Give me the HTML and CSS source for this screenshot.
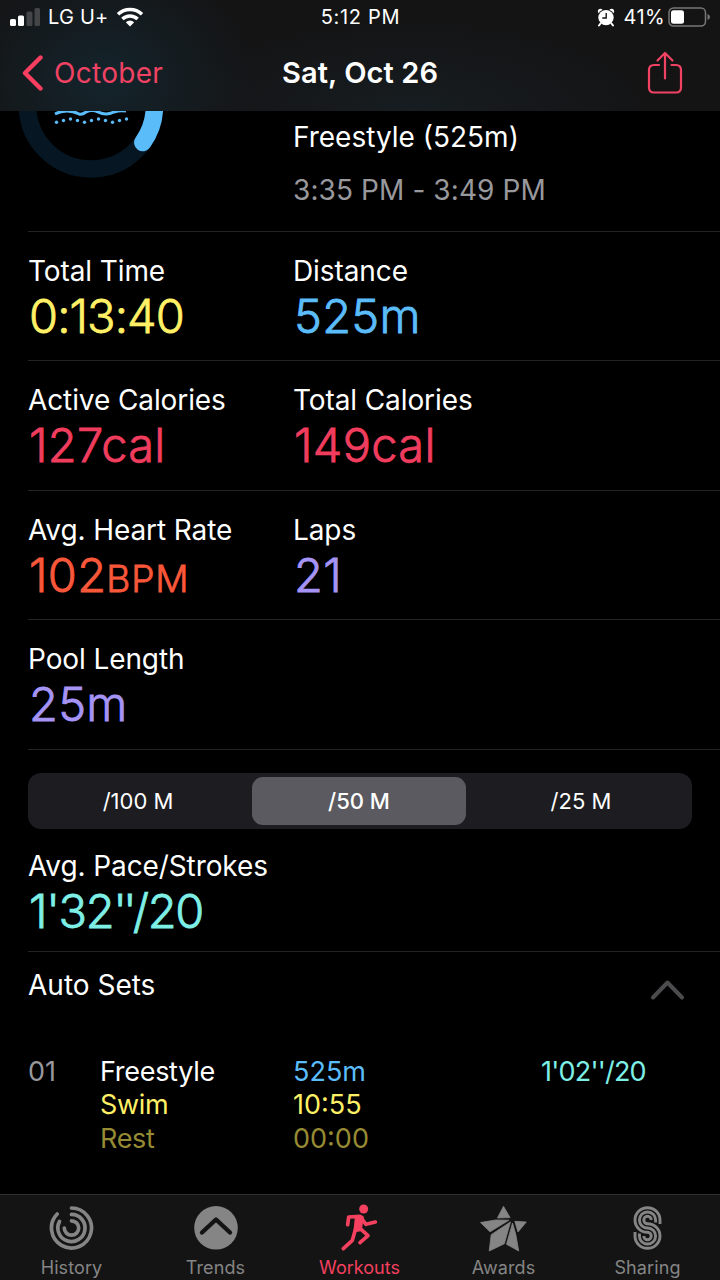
FILE: index.html
```html
<!DOCTYPE html>
<html lang="en">
<head>
  <meta charset="UTF-8">
  <meta name="viewport" content="width=device-width, initial-scale=1.0">
  <title>Workout Details</title>
  <link rel="stylesheet" href="styles.css">
</head>
<body>
  <div class="app">
    <header class="top">
      <div class="status-bar">
        <div class="status-left">
          <svg class="signal" width="30" height="20" viewBox="0 0 30 20">
            <rect x="0" y="12" width="6" height="7" rx="1.5" fill="#fff"/>
            <rect x="8" y="8.5" width="6" height="10.5" rx="1.5" fill="#fff"/>
            <rect x="16.500" y="4.500" width="6" height="14.500" rx="1.5" fill="#434546"/>
            <rect x="24.500" y="1" width="5.500" height="18" rx="1.5" fill="#434546"/>
          </svg>
          <span class="carrier">LG U+</span>
          <svg class="wifi" width="28" height="20" viewBox="0 0 28 20" fill="none" stroke="#fff" stroke-width="3.6">
            <path d="M2 7.200A17.500 17.500 0 0 1 26 7.200"/>
            <path d="M6.400 12A11 11 0 0 1 21.600 12"/>
            <path d="M14 19.500L9.800 15.300Q14 11.800 18.200 15.300Z" fill="#fff" stroke="none"/>
          </svg>
        </div>
        <span class="clock">5:12 PM</span>
        <div class="status-right">
          <svg class="alarm" width="18" height="19" viewBox="0 0 18 19">
            <circle cx="3.400" cy="3.200" r="2.500" fill="#fff"/>
            <circle cx="14.600" cy="3.200" r="2.500" fill="#fff"/>
            <circle cx="9" cy="9.600" r="8.600" fill="#131314"/>
            <path d="M3.500 15.500L2 17.500M14.500 15.500L16 17.500" stroke="#fff" stroke-width="2" stroke-linecap="round"/>
            <circle cx="9" cy="9.600" r="7.700" fill="#fff"/>
            <path d="M9.200 5V10H5.300" fill="none" stroke="#131314" stroke-width="1.400"/>
          </svg>
          <span class="percent">41%</span>
          <svg class="battery" width="43" height="20" viewBox="0 0 43 20">
            <rect x="1" y="1" width="36.500" height="18" rx="4.500" fill="none" stroke="#777" stroke-width="1.500"/>
            <rect x="3" y="3.300" width="13" height="13.500" rx="2.500" fill="#fff"/>
            <path d="M39.500 7Q42 8 42 10T39.500 13Z" fill="#777"/>
          </svg>
        </div>
      </div>
      <nav class="nav-bar">
        <a class="back">
          <svg width="22" height="38" viewBox="0 0 22 38"><path d="M18.500 3.500L3 19L18.500 34.500" fill="none" stroke="#fa3e60" stroke-width="4.400" stroke-linecap="round" stroke-linejoin="round"/></svg>
          <span>October</span>
        </a>
        <h1>Sat, Oct 26</h1>
        <a class="share">
          <svg width="36" height="44" viewBox="0 0 36 44" fill="none" stroke="#f04364" stroke-width="2.200" stroke-linecap="round" stroke-linejoin="round">
            <path d="M12 14H7Q2 14 2 19V36.500Q2 41.500 7 41.500H29Q34 41.500 34 36.500V19Q34 14 29 14H24.500"/>
            <path d="M18 27.500V2M10.500 9.500L18 2L25.500 9.500"/>
          </svg>
        </a>
      </nav>
    </header>

    <main>
      <section class="summary">
        <div class="ring">
          <svg width="146" height="67" viewBox="0 0 146 67" fill="none">
            <circle cx="73" cy="-5.500" r="63.500" stroke="#061723" stroke-width="17.500"/>
            <path d="M136.500 -6A63.500 63.500 0 0 1 124.800 31.500" stroke="#5bbcfa" stroke-width="17.500" stroke-linecap="round"/>
            <path d="M37 3Q43 0 49 0Q55 0 61 3Q64 4 68 1Q74 -2 80 1Q88 5 96 1Q102 -1 108 0" stroke="#5bbcfa" stroke-width="3"/>
            <g fill="#5bbcfa">
              <circle cx="38.500" cy="11.300" r="1.700"/><circle cx="45.500" cy="9.500" r="1.700"/><circle cx="52.500" cy="8" r="1.700"/><circle cx="59.500" cy="9.500" r="1.700"/><circle cx="66.500" cy="11.300" r="1.700"/><circle cx="73.500" cy="9.500" r="1.700"/><circle cx="80.500" cy="8" r="1.700"/><circle cx="87.500" cy="9.500" r="1.700"/><circle cx="94.500" cy="11.300" r="1.700"/><circle cx="101.500" cy="9.500" r="1.700"/><circle cx="108.500" cy="8" r="1.700"/>
            </g>
          </svg>
        </div>
        <div class="summary-text">
          <p class="workout-name">Freestyle (525m)</p>
          <p class="workout-time">3:35 PM - 3:49 PM</p>
        </div>
      </section>

      <section class="stats">
        <div class="stat-row">
          <div class="stat"><p class="label">Total Time</p><p class="value duration yellow">0:13:40</p></div>
          <div class="stat"><p class="label">Distance</p><p class="value blue">525m</p></div>
        </div>
        <div class="stat-row">
          <div class="stat"><p class="label">Active Calories</p><p class="value pink">127cal</p></div>
          <div class="stat"><p class="label">Total Calories</p><p class="value pink">149cal</p></div>
        </div>
        <div class="stat-row">
          <div class="stat"><p class="label">Avg. Heart Rate</p><p class="value orange">102<span class="unit">BPM</span></p></div>
          <div class="stat"><p class="label">Laps</p><p class="value purple">21</p></div>
        </div>
        <div class="stat-row">
          <div class="stat"><p class="label">Pool Length</p><p class="value purple">25m</p></div>
        </div>
      </section>

      <div class="segmented">
        <button>/100 M</button>
        <button class="selected">/50 M</button>
        <button>/25 M</button>
      </div>

      <section class="pace">
        <p class="label">Avg. Pace/Strokes</p>
        <p class="value pace-value teal">1'32<span class="seconds">''</span>/20</p>
      </section>

      <section class="sets">
        <div class="sets-header">
          <h2>Auto Sets</h2>
          <svg width="36" height="22" viewBox="0 0 36 22"><path d="M3 18.500L17.500 3.500L32 18.500" fill="none" stroke="#4c4c4e" stroke-width="4" stroke-linecap="round" stroke-linejoin="round"/></svg>
        </div>
        <div class="set">
          <span class="set-number">01</span>
          <div class="set-type"><p>Freestyle</p><p class="yellow">Swim</p><p class="rest">Rest</p></div>
          <div class="set-data"><p class="blue">525m</p><p class="yellow">10:55</p><p class="rest">00:00</p></div>
          <span class="set-pace teal">1'02''/20</span>
        </div>
      </section>
    </main>

    <footer class="tab-bar">
      <a class="tab">
        <svg width="48" height="48" viewBox="0 0 48 48" fill="none" stroke="#858585" stroke-width="3.700" stroke-linecap="round">
          <path d="M23.500 4A20 20 0 1 1 9.200 10"/>
          <path d="M23.500 10.400A13.600 13.600 0 1 1 11.500 17.500"/>
          <path d="M23.500 16.800A7.200 7.200 0 1 1 16.300 24"/>
        </svg>
        <span>History</span>
      </a>
      <a class="tab">
        <svg width="48" height="48" viewBox="0 0 48 48">
          <circle cx="24" cy="23.800" r="21.800" fill="#858585"/>
          <path d="M10 28.500L24 15.500L38 28.500" fill="none" stroke="#141414" stroke-width="4.400" stroke-linecap="round" stroke-linejoin="round"/>
        </svg>
        <span>Trends</span>
      </a>
      <a class="tab active">
        <svg width="48" height="48" viewBox="-12 3 144 144" fill="none" stroke="#f5405f" stroke-width="11" stroke-linecap="round" stroke-linejoin="round">
          <circle cx="71" cy="18" r="13.500" fill="#f5405f" stroke="none"/>
          <path d="M23 65L26 42L60 40L78 64L106 57"/>
          <path d="M50 43H66L60 79L46 82Z" fill="#f5405f"/>
          <path d="M60 76L84 98L60 119"/>
          <path d="M46 80L37 112L10 137"/>
        </svg>
        <span>Workouts</span>
      </a>
      <a class="tab">
        <svg width="48" height="48" viewBox="0.500 0 48 48" fill="#858585" stroke="#858585" stroke-width="0.800" stroke-linejoin="round">
          <path d="M24 2.300L17.900 14L30.600 13.600Z"/>
          <path d="M1 18.500L16 16L29.500 16.200L10.500 27.800Z"/>
          <path d="M35.300 17.300L46.800 18L38.500 28Z"/>
          <path d="M11.700 30.700L31 17.900L24.800 39.800L9.700 47Z"/>
          <path d="M33 19L36.300 30.500L39.200 47L27 40.300Z"/>
        </svg>
        <span>Awards</span>
      </a>
      <a class="tab">
        <svg width="48" height="48" viewBox="0.500 0 48 48" fill="none" stroke="#858585" stroke-width="2.900">
          <path d="M36.500 20V16A12.500 12.300 0 1 0 24 28.300A3.700 3.700 0 1 1 20.300 32"/>
          <path d="M32.100 18.500V16A8.100 8 0 1 0 24 24A8.100 8 0 1 1 15.900 32V29.500"/>
          <path d="M27.700 16A3.700 3.700 0 1 0 24 19.700A12.500 12.300 0 1 1 11.500 32V28"/>
        </svg>
        <span>Sharing</span>
      </a>
    </footer>
  </div>
</body>
</html>
```
FILE: styles.css
```css
* {
  box-sizing: border-box;
}

body {
  margin: 0;
  background: #000;
  color: #fff;
  font-family: "Inter", "Liberation Sans", sans-serif;
}

p, h1, h2 {
  margin: 0;
}

svg {
  display: block;
  flex-shrink: 0;
}

.app {
  width: 720px;
  height: 1280px;
  display: flex;
  flex-direction: column;
  overflow: hidden;
}

/* Header */
.top {
  height: 111px;
  background: radial-gradient(ellipse 150px 120px at 105px 80px, #14242c, transparent),
    radial-gradient(ellipse 240px 90px at 410px 111px, #171d21, transparent), #141415;
}

.status-bar {
  height: 34px;
  display: grid;
  grid-template-columns: 1fr auto 1fr;
  align-items: center;
  padding: 0 9px 0 10px;
  font-size: 20px;
}

.status-left,
.status-right {
  display: flex;
  align-items: center;
}

.status-right {
  justify-content: flex-end;
}

.carrier {
  margin: 0 8px;
  letter-spacing: 0.2px;
}

.clock {
  letter-spacing: 0.7px;
}

.percent {
  margin: 0 3px 0 8px;
  letter-spacing: 0.4px;
}

.nav-bar {
  height: 77px;
  display: grid;
  grid-template-columns: 1fr auto 1fr;
  align-items: center;
  padding: 0 22px;
}

.back {
  display: flex;
  align-items: center;
  gap: 10px;
  color: #f04364;
  font-size: 28px;
  letter-spacing: 0.3px;
}

.nav-bar h1 {
  font-size: 29px;
  font-weight: 600;
  letter-spacing: 0.1px;
}

.share {
  justify-self: end;
  margin-right: 15px;
}

/* Workout summary */
main {
  flex: 1;
  padding-left: 28px;
}

.summary {
  height: 121px;
  display: flex;
  border-bottom: 1px solid #232324;
}

.ring {
  width: 265px;
  margin-left: -10px;
}

.summary-text {
  padding-top: 9px;
  margin-left: 10px;
  font-size: 28px;
  line-height: 34px;
}

.workout-time {
  margin-top: 19px;
  color: #98989d;
  letter-spacing: 0.1px;
}

/* Stats */
.stat-row {
  height: 129.400px;
  display: grid;
  grid-template-columns: 265px 1fr;
  padding-top: 22px;
  border-bottom: 1px solid #232324;
}

.label {
  font-size: 28px;
  line-height: 34px;
  letter-spacing: -0.1px;
}

.value {
  padding-left: 1px;
  font-size: 47px;
  line-height: 56px;
  font-weight: 300;
  letter-spacing: 0.3px;
  -webkit-text-stroke: 0.8px currentColor;
}

.duration {
  letter-spacing: -0.9px;
}

.pace-value {
  letter-spacing: -1.3px;
}

.seconds {
  letter-spacing: -4px;
}

.unit {
  font-size: 37px;
  letter-spacing: 0.9px;
}

.yellow { color: #fff066; }
.blue { color: #5bbcfa; }
.pink { color: #f03d5e; }
.orange { color: #f9573a; }
.purple { color: #a594f6; }
.teal { color: #7eefe6; }
.rest { color: #978b33; }

/* Split distance picker */
.segmented {
  height: 56px;
  margin: 23px 28px 0 0;
  padding: 4px;
  display: grid;
  grid-template-columns: 212px 214px 214px;
  gap: 8px;
  border-radius: 13px;
  background: #1d1c21;
}

.segmented button {
  border: none;
  border-radius: 11px;
  background: none;
  color: #fff;
  font-family: inherit;
  font-size: 22px;
}

.segmented .selected {
  background: #5b5a60;
  font-weight: 500;
}

.pace {
  height: 123px;
  padding-top: 20px;
  border-bottom: 1px solid #232324;
}

/* Auto sets */
.sets-header {
  display: flex;
  justify-content: space-between;
  align-items: center;
  padding: 16px 34px 0 0;
}

.sets-header h2 {
  font-size: 28px;
  line-height: 34px;
  font-weight: 400;
}

.sets-header svg {
  margin-top: 10px;
}

.set {
  display: grid;
  grid-template-columns: 72px 193px 248px 1fr;
  margin-top: 53px;
  font-size: 27px;
  line-height: 33.500px;
}

.set-number {
  color: #98989d;
}

.set-type {
  letter-spacing: -0.3px;
}

.set-pace {
  letter-spacing: -0.8px;
}

/* Tab bar */
.tab-bar {
  height: 86px;
  display: grid;
  grid-template-columns: repeat(5, 1fr);
  background: #141414;
  border-top: 1px solid #2e2e2f;
}

.tab {
  display: flex;
  flex-direction: column;
  align-items: center;
  padding: 9px 1px 0 0;
  color: #858585;
  font-size: 18px;
  letter-spacing: 0.1px;
}

.tab span {
  line-height: 24px;
  margin-top: 4px;
}

.tab.active {
  color: #f5405f;
  letter-spacing: 0;
}
```
